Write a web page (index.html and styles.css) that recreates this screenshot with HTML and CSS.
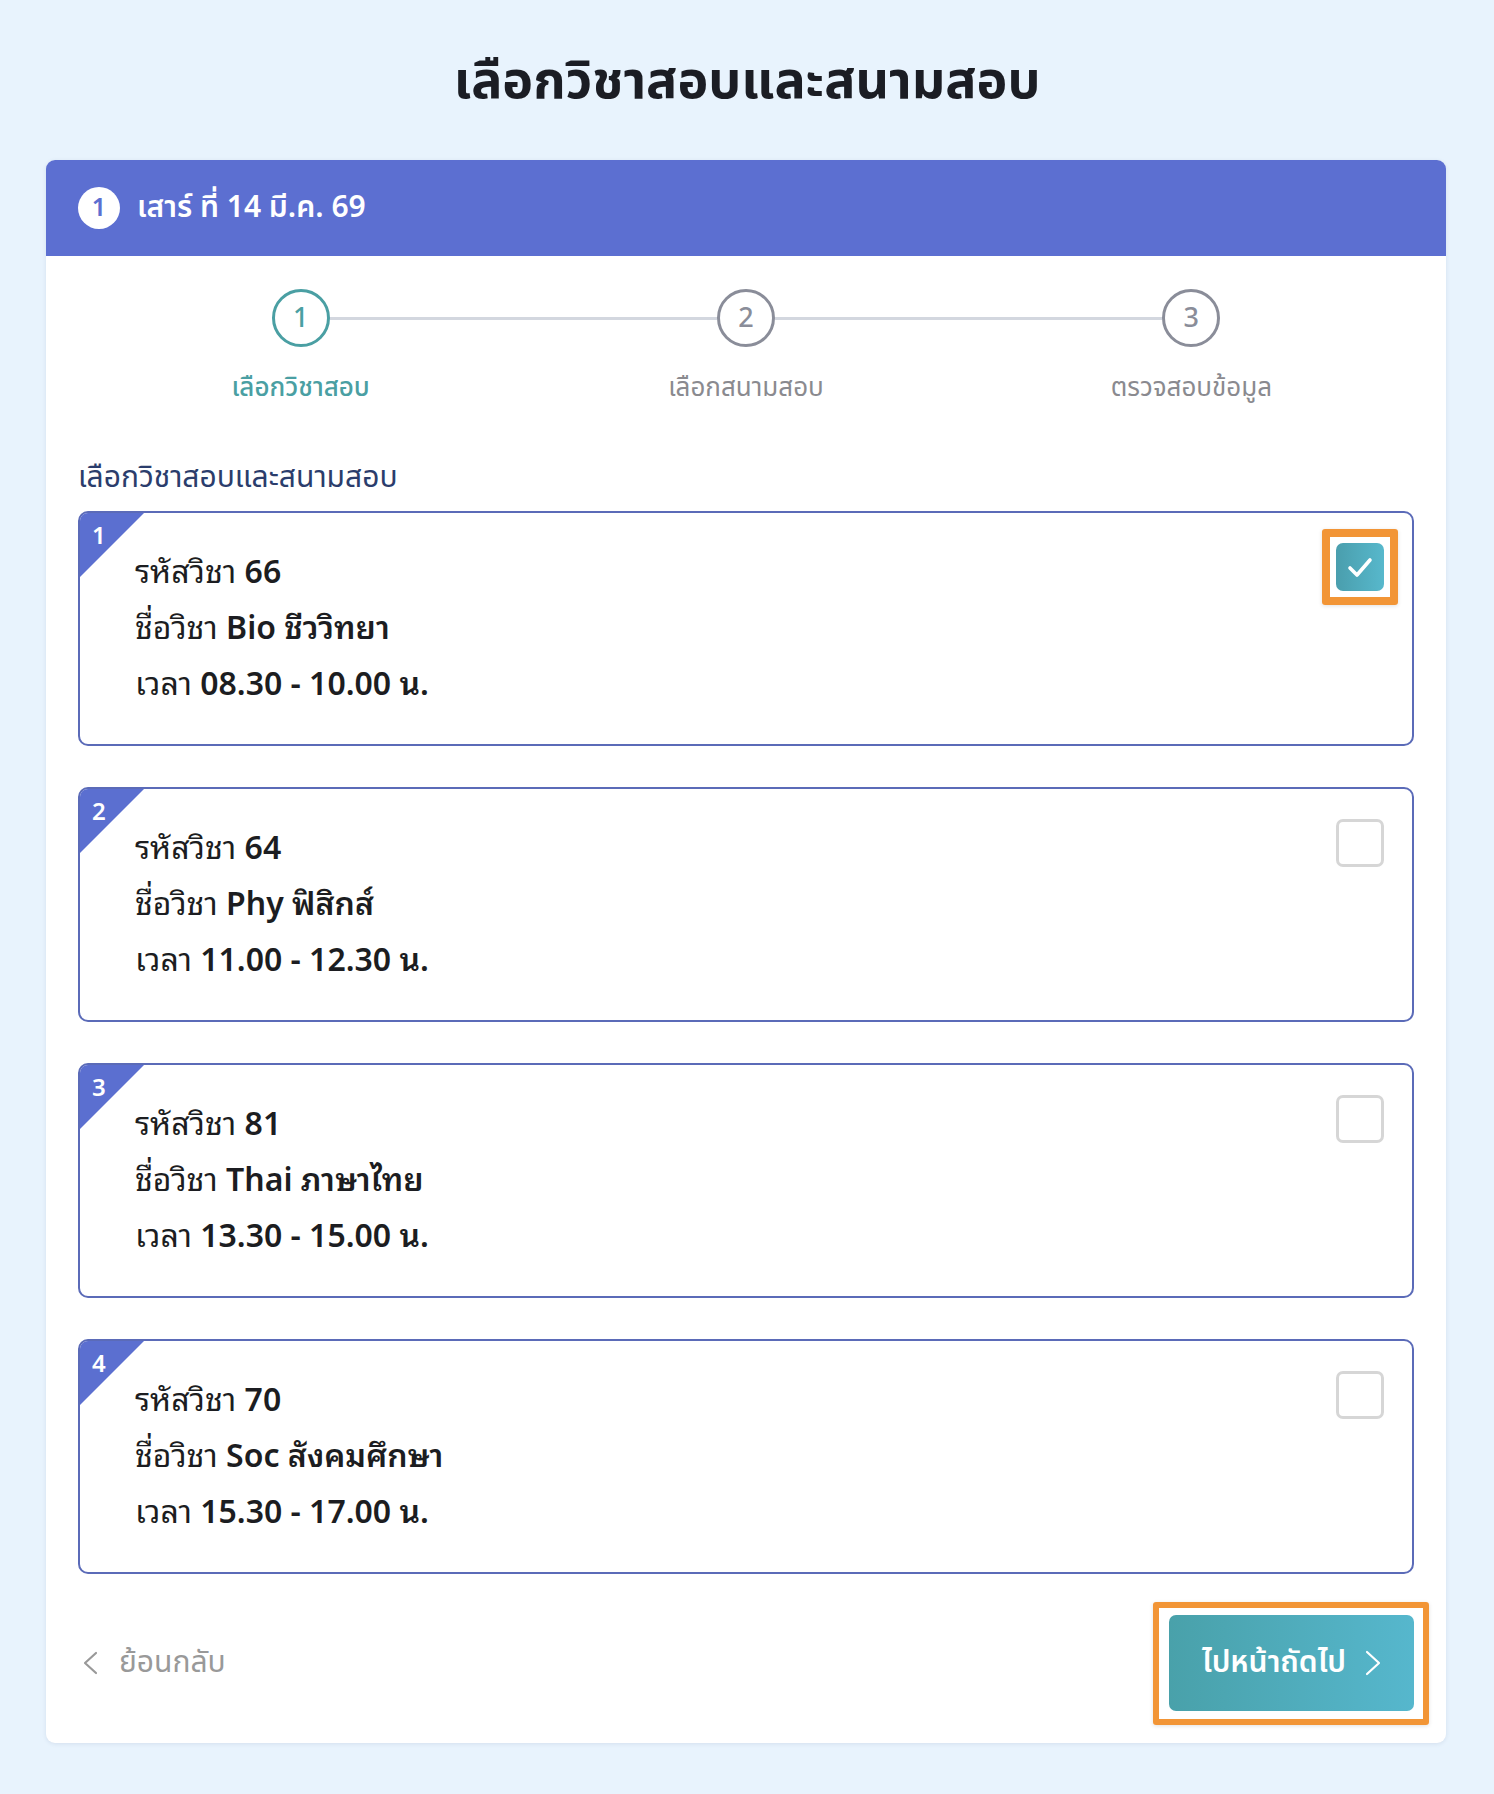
FILE: index.html
```html
<!DOCTYPE html>
<html lang="th">
<head>
<meta charset="utf-8">
<title>เลือกวิชาสอบและสนามสอบ</title>
<link rel="stylesheet" href="styles.css">
</head>
<body>
<main class="page">
  <h1 class="page-title">เลือกวิชาสอบและสนามสอบ</h1>
  <section class="panel">
    <header class="panel-head">
      <span class="head-num">1</span>
      <span class="head-text">เสาร์ ที่ 14 มี.ค. 69</span>
    </header>
    <div class="panel-body">
      <ol class="stepper">
        <li class="step active"><span class="step-circle">1</span><span class="step-label">เลือกวิชาสอบ</span></li>
        <li class="step"><span class="step-circle">2</span><span class="step-label">เลือกสนามสอบ</span></li>
        <li class="step"><span class="step-circle">3</span><span class="step-label">ตรวจสอบข้อมูล</span></li>
      </ol>
      <h2 class="section-title">เลือกวิชาสอบและสนามสอบ</h2>
      <div class="items">
        <div class="item">
          <span class="corner"><span class="corner-num">1</span></span>
          <div class="item-text">
            <p>รหัสวิชา <b>66</b></p>
            <p>ชื่อวิชา <b>Bio ชีววิทยา</b></p>
            <p>เวลา <b>08.30 - 10.00 น.</b></p>
          </div>
          <span class="check checked highlighted">
            <svg viewBox="0 0 48 48" width="48" height="48"><polyline points="14,25 21,32 34,17" fill="none" stroke="#fff" stroke-width="3.6" stroke-linecap="round" stroke-linejoin="round"/></svg>
          </span>
        </div>
        <div class="item">
          <span class="corner"><span class="corner-num">2</span></span>
          <div class="item-text">
            <p>รหัสวิชา <b>64</b></p>
            <p>ชื่อวิชา <b>Phy ฟิสิกส์</b></p>
            <p>เวลา <b>11.00 - 12.30 น.</b></p>
          </div>
          <span class="check"></span>
        </div>
        <div class="item">
          <span class="corner"><span class="corner-num">3</span></span>
          <div class="item-text">
            <p>รหัสวิชา <b>81</b></p>
            <p>ชื่อวิชา <b>Thai ภาษาไทย</b></p>
            <p>เวลา <b>13.30 - 15.00 น.</b></p>
          </div>
          <span class="check"></span>
        </div>
        <div class="item">
          <span class="corner"><span class="corner-num">4</span></span>
          <div class="item-text">
            <p>รหัสวิชา <b>70</b></p>
            <p>ชื่อวิชา <b>Soc สังคมศึกษา</b></p>
            <p>เวลา <b>15.30 - 17.00 น.</b></p>
          </div>
          <span class="check"></span>
        </div>
      </div>
      <div class="actions">
        <a class="back" href="#">
          <svg viewBox="0 0 16 24" width="16" height="24"><polyline points="14,2 3,12 14,22" fill="none" stroke="#999" stroke-width="2.2" stroke-linecap="round" stroke-linejoin="round"/></svg>
          <span>ย้อนกลับ</span>
        </a>
        <button class="next highlighted" type="button">
          <span>ไปหน้าถัดไป</span>
          <svg viewBox="0 0 16 26" width="16" height="26"><polyline points="2,2 14,13 2,24" fill="none" stroke="#fff" stroke-width="2.2" stroke-linecap="round" stroke-linejoin="round"/></svg>
        </button>
      </div>
    </div>
  </section>
</main>
</body>
</html>
```
FILE: styles.css
```css
* { box-sizing: border-box; }
html, body { margin: 0; padding: 0; }
body {
  background: #e8f3fd;
  font-family: "Noto Sans Thai", "Noto Sans", sans-serif;
  color: #1c1e24;
}
.page { padding: 42px 0 51px; }
.page-title {
  margin: 0 0 38px;
  text-align: center;
  font-size: 52px;
  line-height: 80px;
  font-weight: 700;
  color: #1b1d24;
}
.panel {
  margin: 0 48px 0 46px;
  background: #fff;
  border-radius: 9px;
  box-shadow: 0 1px 4px rgba(40, 60, 110, 0.10);
  overflow: hidden;
}
.panel-head {
  height: 96px;
  background: #5c6fd1;
  display: flex;
  align-items: center;
  gap: 17px;
  padding-left: 32px;
  color: #fff;
}
.head-num {
  width: 42px;
  height: 42px;
  border-radius: 50%;
  background: #fff;
  color: #5c6fd1;
  display: flex;
  align-items: center;
  justify-content: center;
  font-size: 25px;
  font-weight: 600;
}
.head-text {
  font-size: 30px;
  font-weight: 600;
}
.panel-body { padding: 33px 32px 32px; }
.stepper {
  list-style: none;
  margin: 0;
  padding: 0;
  display: grid;
  grid-template-columns: repeat(3, 1fr);
}
.step {
  position: relative;
  display: flex;
  flex-direction: column;
  align-items: center;
}
.step + .step::before {
  content: "";
  position: absolute;
  top: 28px;
  right: calc(50% + 29px);
  width: calc(100% - 58px);
  height: 3px;
  background: #d3d7df;
}
.step-circle {
  width: 58px;
  height: 58px;
  border-radius: 50%;
  border: 3px solid #8a8d99;
  color: #8a8d99;
  display: flex;
  align-items: center;
  justify-content: center;
  font-size: 27px;
  font-weight: 500;
  background: #fff;
}
.step-label {
  margin-top: 21px;
  font-size: 26px;
  line-height: 40px;
  color: #8a8a8f;
}
.step.active .step-circle { border-color: #4a9fa3; color: #4a9fa3; }
.step.active .step-label { color: #4a9fa3; font-weight: 500; }
.section-title {
  margin: 50px 0 13px;
  font-size: 30px;
  line-height: 40px;
  font-weight: 400;
  color: #2b3d6c;
}
.items { display: flex; flex-direction: column; gap: 41px; }
.item {
  position: relative;
  height: 235px;
  border: 2px solid #5b6bb8;
  border-radius: 10px;
  padding: 30px 28px 0 55px;
  display: flex;
  justify-content: space-between;
  align-items: flex-start;
}
.corner {
  position: absolute;
  top: 0;
  left: 0;
  width: 64px;
  height: 64px;
  background: #5b6fd0;
  clip-path: polygon(0 0, 100% 0, 0 100%);
  border-top-left-radius: 8px;
}
.corner-num {
  position: absolute;
  top: 6px;
  left: 12px;
  color: #fff;
  font-family: "Noto Sans", sans-serif;
  font-size: 24px;
  line-height: 32px;
  font-weight: 600;
}
.item-text p {
  margin: 0;
  font-family: "Noto Sans", "Noto Sans Thai Looped", sans-serif;
  font-size: 32px;
  line-height: 56px;
  color: #1c1d21;
}
.item-text b { font-weight: 600; }
.check {
  position: relative;
  width: 48px;
  height: 48px;
  border: 3px solid #d6d6d6;
  border-radius: 7px;
  flex: none;
}
.check.checked {
  border: none;
  background: linear-gradient(90deg, #4a9ead, #57b8cc);
}
.check svg { display: block; }
.highlighted::after {
  content: "";
  position: absolute;
  border: 8px solid #f29536;
  border-radius: 3px;
  box-shadow: 0 1px 4px rgba(0,0,0,0.12);
  pointer-events: none;
}
.check.highlighted::after { inset: -14px; }
.actions {
  margin-top: 41px;
  display: flex;
  justify-content: space-between;
  align-items: center;
}
.back {
  display: flex;
  align-items: center;
  gap: 21px;
  margin-left: 4px;
  text-decoration: none;
  color: #999;
  font-size: 30px;
}
.back svg { display: block; }
.next {
  position: relative;
  width: 245px;
  height: 96px;
  border: none;
  border-radius: 7px;
  background: linear-gradient(90deg, #49a1aa, #56b7cd);
  color: #fff;
  display: flex;
  align-items: center;
  justify-content: center;
  gap: 19px;
  padding: 0;
  font-family: "Noto Sans Thai", sans-serif;
  font-size: 30px;
  font-weight: 600;
  cursor: pointer;
}
.next svg { display: block; }
.next.highlighted::after { top: -13px; bottom: -14px; left: -16px; right: -15px; border-width: 6px; }
```
